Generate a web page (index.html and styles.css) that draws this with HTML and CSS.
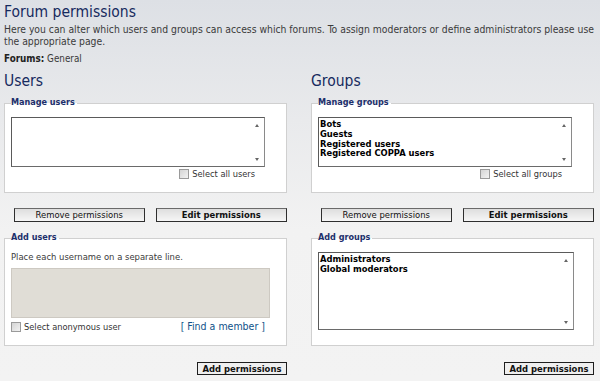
FILE: index.html
```html
<!DOCTYPE html>
<html lang="en">
<head>
<meta charset="utf-8">
<title>Forum permissions</title>
<link rel="stylesheet" href="styles.css">
</head>
<body>
<div class="page">
  <h1>Forum permissions</h1>
  <p class="intro">Here you can alter which users and groups can access which forums. To assign moderators or define administrators please use<br>the appropriate page.</p>
  <p class="forums"><b>Forums:</b> General</p>

  <div class="cols">
    <section class="col">
      <h2>Users</h2>
      <fieldset class="box manage">
        <legend>Manage users</legend>
        <div class="list list-short">
          <div class="items"></div>
          <div class="scroll"><span class="up"></span><span class="down"></span></div>
        </div>
        <div class="check-row"><label class="check"><span class="cb"></span>Select all users</label></div>
      </fieldset>
      <div class="btns">
        <button class="btn">Remove permissions</button>
        <button class="btn strong">Edit permissions</button>
      </div>
      <fieldset class="box add">
        <legend>Add users</legend>
        <p class="hint">Place each username on a separate line.</p>
        <div class="textarea"></div>
        <div class="anon-row">
          <label class="check"><span class="cb"></span>Select anonymous user</label>
          <a class="find">[ Find a member ]</a>
        </div>
      </fieldset>
      <div class="submit"><button class="btn-add">Add permissions</button></div>
    </section>

    <section class="col">
      <h2>Groups</h2>
      <fieldset class="box manage">
        <legend>Manage groups</legend>
        <div class="list list-short">
          <div class="items">
            <div>Bots</div>
            <div>Guests</div>
            <div>Registered users</div>
            <div>Registered COPPA users</div>
          </div>
          <div class="scroll"><span class="up"></span><span class="down"></span></div>
        </div>
        <div class="check-row"><label class="check"><span class="cb"></span>Select all groups</label></div>
      </fieldset>
      <div class="btns">
        <button class="btn">Remove permissions</button>
        <button class="btn strong">Edit permissions</button>
      </div>
      <fieldset class="box add add-groups">
        <legend>Add groups</legend>
        <div class="list list-tall">
          <div class="items">
            <div>Administrators</div>
            <div>Global moderators</div>
          </div>
          <div class="scroll"><span class="up"></span><span class="down"></span></div>
        </div>
      </fieldset>
      <div class="submit"><button class="btn-add">Add permissions</button></div>
    </section>
  </div>
</div>
</body>
</html>
```
FILE: styles.css
```css
* { box-sizing: border-box; }
html, body { margin: 0; padding: 0; }
body {
  width: 600px;
  height: 381px;
  overflow: hidden;
  background: linear-gradient(#dde0e5 0, #e9eaec 120px, #f2f2f2 230px, #f3f3f3 100%);
  font-family: "DejaVu Sans Condensed", "DejaVu Sans", Verdana, sans-serif;
  font-stretch: condensed;
  font-size: 9.2px;
  color: #3a3a3a;
}
.page { padding: 2px 6px 0 4px; }
h1 {
  margin: 0;
  font-size: 15.5px;
  line-height: 20px;
  font-weight: normal;
  color: #162a5e;
}
.intro { margin: 1px 0 0; font-size: 10.3px; line-height: 12px; white-space: nowrap; }
.forums { margin: 6px 0 0; font-size: 9.8px; line-height: 12px; }
.forums b { color: #222; }
.cols {
  display: grid;
  grid-template-columns: 283px 283px;
  column-gap: 24px;
}
h2 {
  margin: 6px 0 0;
  font-size: 15.5px;
  line-height: 20px;
  font-weight: normal;
  color: #162a5e;
}
.box {
  margin: 6px 0 0;
  padding: 0 6px 13px;
  border: 1px solid #d0d0d0;
  background: #fff;
  min-width: 0;
}
.box legend {
  padding: 0 2px 2px 0;
  font-size: 9px;
  font-weight: bold;
  color: #1c2f6b;
  line-height: 11px;
}
.list {
  display: flex;
  width: 254px;
  margin-top: 7px;
  border: 1px solid #5a5a5a;
  border-right-color: #8a8a8a;
  border-bottom-color: #6a6a6a;
  background: #fff;
}
.list-short { height: 50px; }
.list-tall { height: 78px; width: 256px; }
.items {
  flex: 1;
  padding: 2px 1px 0;
  font-family: "DejaVu Sans", Verdana, sans-serif;
  font-stretch: normal;
  font-weight: bold;
  font-size: 8.4px;
  line-height: 9.8px;
  color: #000;
}
.scroll {
  width: 14px;
  display: flex;
  flex-direction: column;
  justify-content: space-between;
  align-items: center;
  padding: 6px 0 5px;
}
.up, .down { width: 0; height: 0; border-left: 2.5px solid transparent; border-right: 2.5px solid transparent; }
.up { border-bottom: 3px solid #666; }
.down { border-top: 3px solid #666; }
.check-row {
  width: 254px;
  display: flex;
  justify-content: flex-end;
  padding-right: 10px;
  margin-top: 1px;
}
.check { display: flex; align-items: center; gap: 3px; line-height: 11px; color: #333; }
.cb {
  width: 10px;
  height: 10px;
  border: 1px solid #9a9a9a;
  background: linear-gradient(135deg, #d4d4d4, #f2f2f2);
}
.btns {
  display: flex;
  gap: 11px;
  padding-left: 10px;
  margin-top: 15px;
}
.btn {
  width: 131px;
  height: 14px;
  padding: 0;
  font: inherit;
  font-size: 9.4px;
  line-height: 12px;
  color: #111;
  border: 1px solid #2e2e2e;
  border-top-color: #6a6a6a;
  background: linear-gradient(#dedede, #f6f6f6);
}
.btn.strong { width: 132px; font-weight: bold; }
.add { margin-top: 10px; }
.add-groups { padding-bottom: 15px; }
.hint { margin: 6px 0 0; font-size: 9.4px; line-height: 11px; }
.textarea {
  width: 259px;
  height: 50px;
  margin-top: 6px;
  background: #e0ddd6;
  border: 1px solid #cdc9c2;
}
.anon-row {
  display: flex;
  align-items: center;
  width: 254px;
  margin-top: 3px;
}
.find {
  margin-left: auto;
  color: #105289;
  font-size: 10.5px;
  line-height: 11px;
}
.submit { display: flex; justify-content: flex-end; margin-top: 16px; }
.btn-add {
  width: 90px;
  height: 13px;
  padding: 0;
  font: inherit;
  font-size: 9.4px;
  font-weight: bold;
  line-height: 11px;
  color: #111;
  background: #efefef;
  border: 1px solid #1e1e1e;
}
```
